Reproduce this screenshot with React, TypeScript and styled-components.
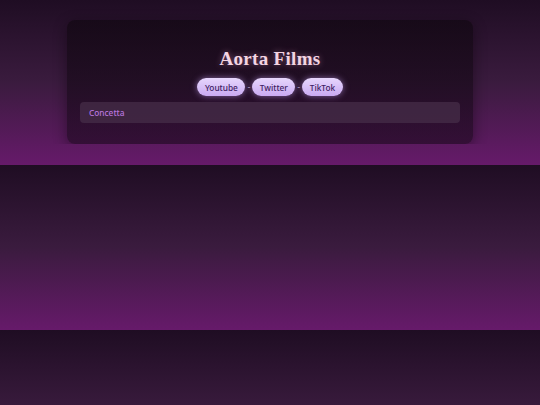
import React from "react";
import styled, { createGlobalStyle } from "styled-components";

const Global = createGlobalStyle`
  html {
    background: repeating-linear-gradient(180deg, #1f0d23 0px, #3a1b3e 82px, #661a6a 165px);
    min-height: 100%;
  }
  body {
    margin: 0;
    font-family: "Noto Sans", "Liberation Sans", sans-serif;
  }
`;

const Page = styled.div`
  display: flex;
  justify-content: center;
  padding-top: 20px;
`;

const Card = styled.section`
  width: 406px;
  box-sizing: border-box;
  padding: 27px 13px 21px;
  border-radius: 8px;
  background: linear-gradient(180deg, rgba(14, 6, 14, 0.62) 0%, rgba(20, 6, 22, 0.55) 100%);
  box-shadow: 0 4px 14px rgba(10, 0, 12, 0.45);
  display: flex;
  flex-direction: column;
  align-items: stretch;
`;

const Title = styled.h1`
  margin: 0;
  font-family: "Liberation Serif", "DejaVu Serif", serif;
  font-weight: 700;
  font-size: 19px;
  line-height: 24px;
  letter-spacing: 0.3px;
  text-align: center;
  color: #f4d4e2;
  text-shadow: 0 0 6px rgba(240, 170, 210, 0.45);
`;

const Links = styled.nav`
  margin-top: 7px;
  display: flex;
  justify-content: center;
  align-items: center;
  gap: 2px;
`;

const Pill = styled.a`
  height: 18px;
  padding: 0 7.5px;
  border-radius: 9px;
  display: flex;
  align-items: center;
  font-family: "Noto Sans", sans-serif;
  font-size: 8.3px;
  font-weight: 500;
  color: #3e1c62;
  text-decoration: none;
  background: linear-gradient(180deg, #e6d6fc 0%, #caaaf2 100%);
  box-shadow: 0 0 6px rgba(205, 165, 255, 0.55);
`;

const Sep = styled.span`
  font-size: 9px;
  color: #b9a0c8;
  line-height: 18px;
`;

const Field = styled.div`
  margin-top: 6px;
  height: 21px;
  border-radius: 4px;
  background: rgba(70, 45, 72, 0.75);
  display: flex;
  align-items: center;
  padding: 0 9px;
  font-size: 8.3px;
  font-weight: 500;
  color: #b875de;
`;

export default function App() {
  const links = ["Youtube", "Twitter", "TikTok"];
  return (
    <>
      <Global />
      <Page>
        <Card>
          <Title>Aorta Films</Title>
          <Links>
            {links.map((l, i) => (
              <React.Fragment key={l}>
                {i > 0 && <Sep>-</Sep>}
                <Pill href="#">{l}</Pill>
              </React.Fragment>
            ))}
          </Links>
          <Field>Concetta</Field>
        </Card>
      </Page>
    </>
  );
}
